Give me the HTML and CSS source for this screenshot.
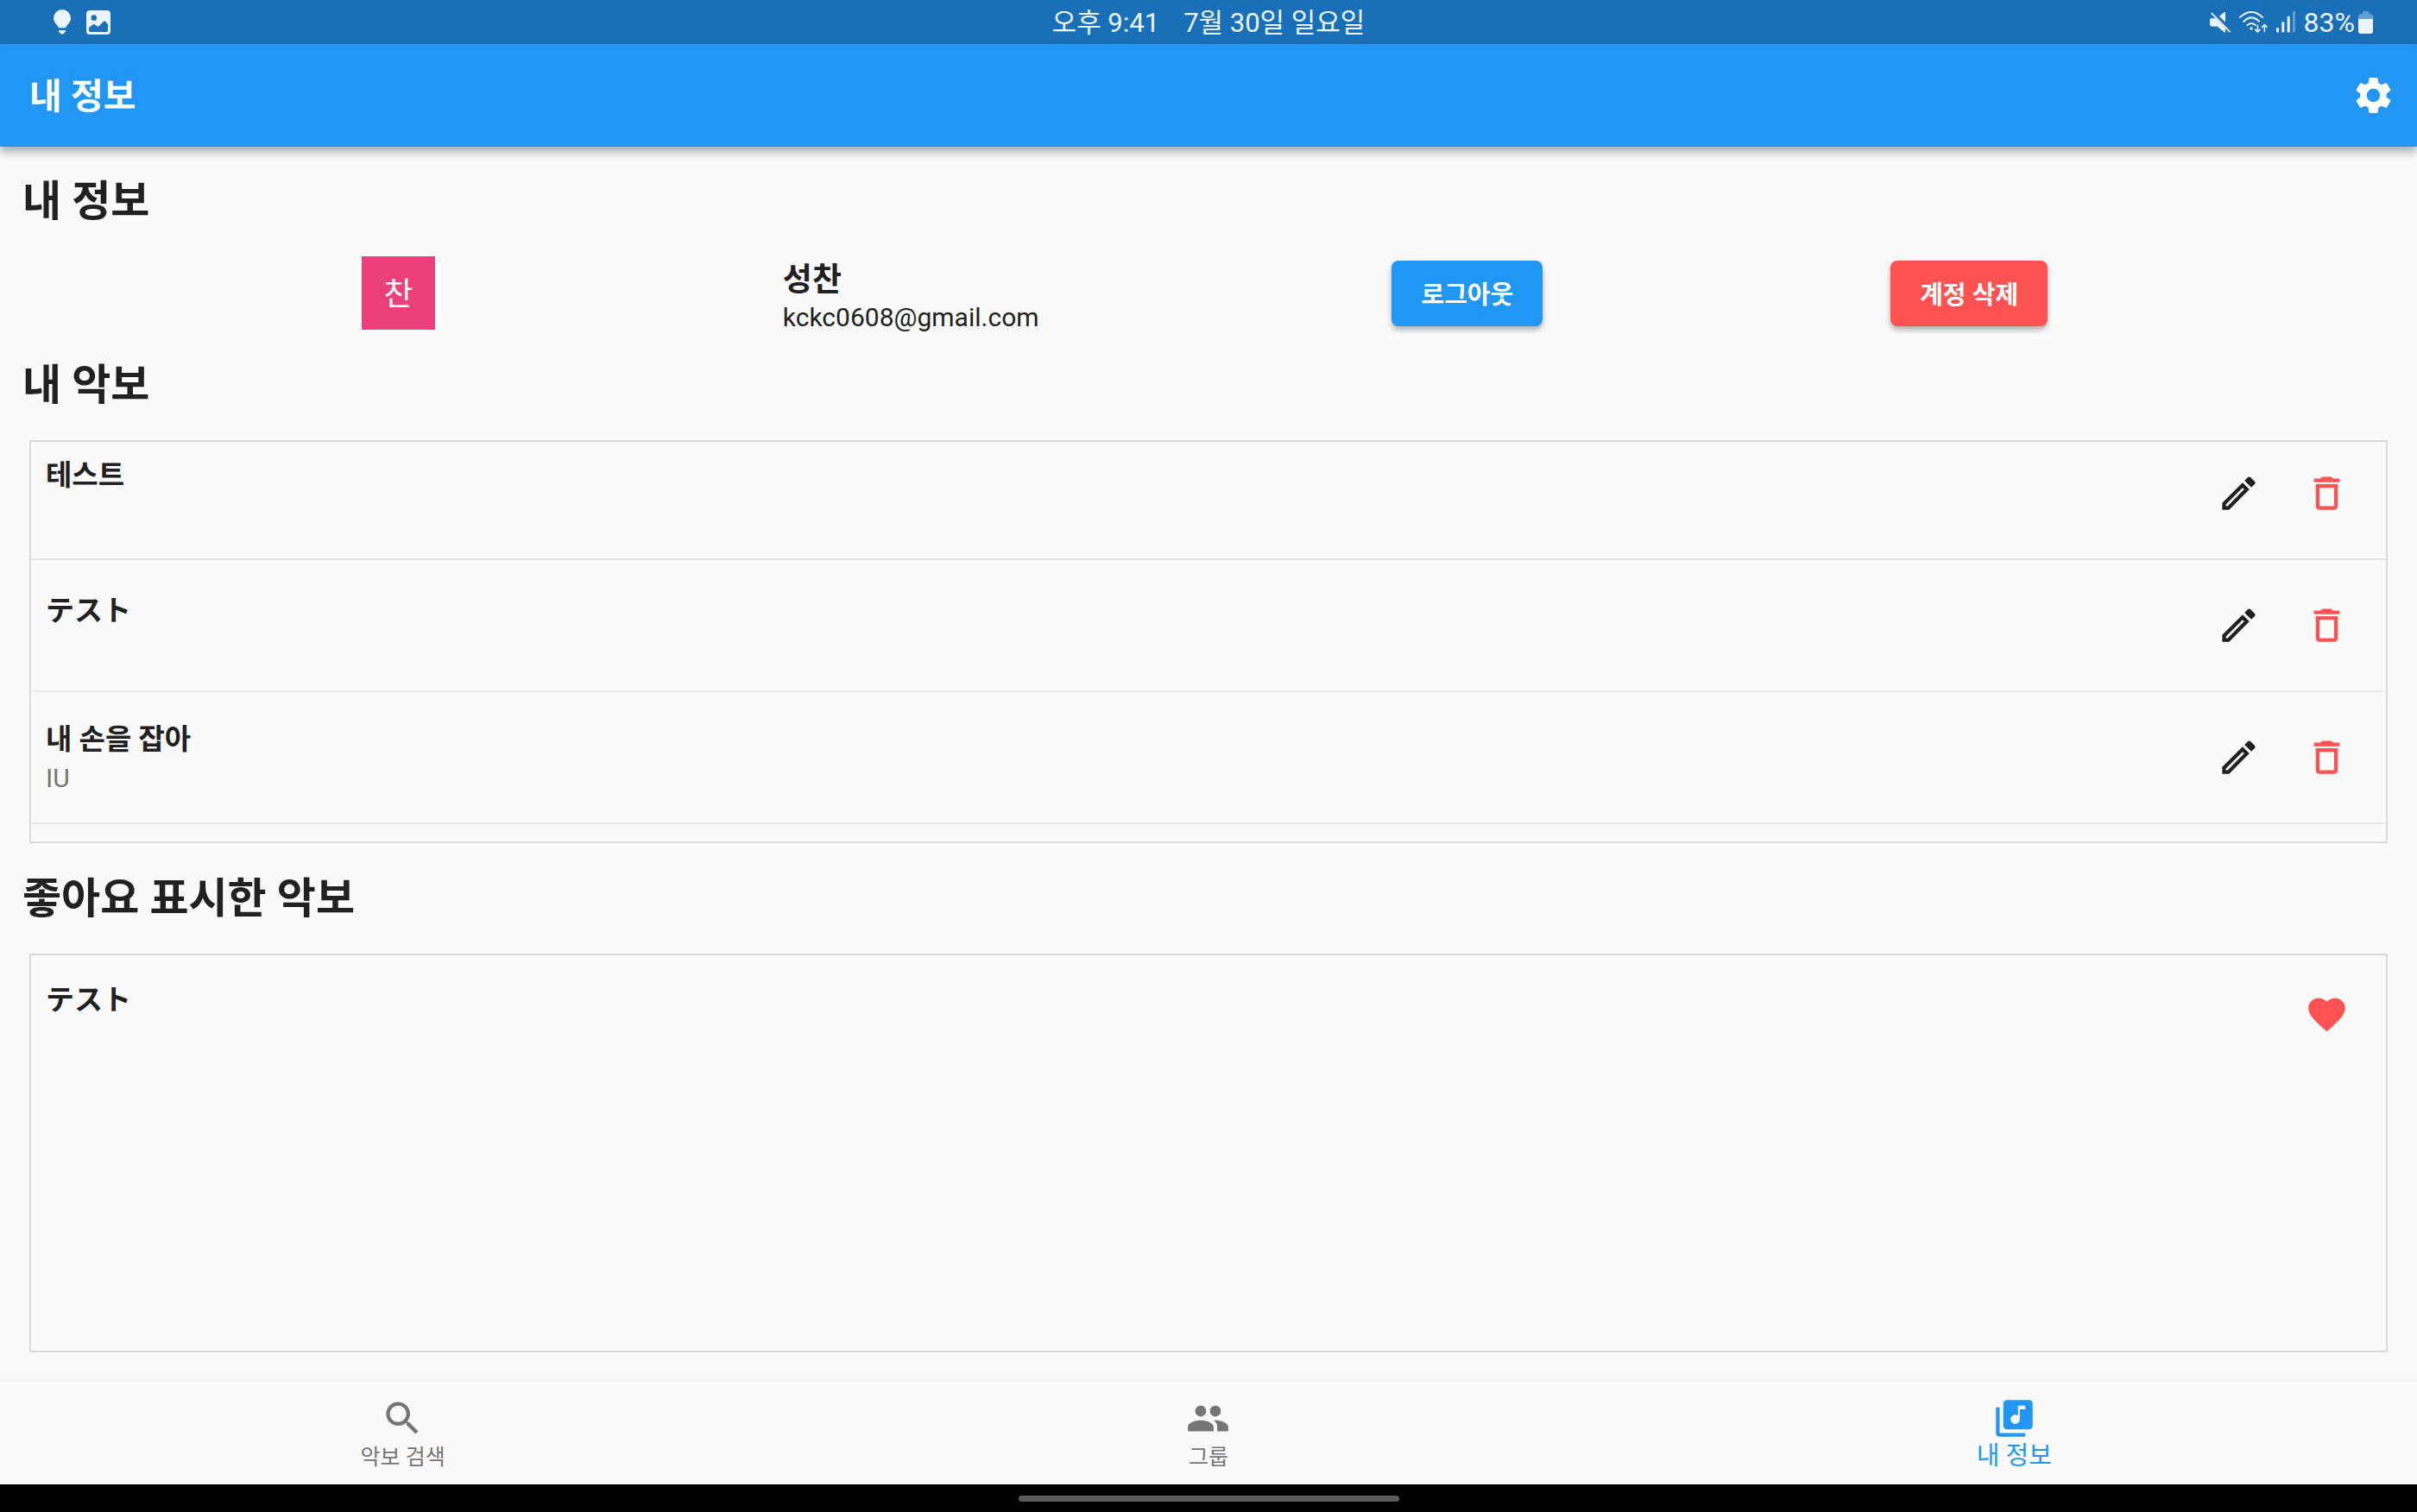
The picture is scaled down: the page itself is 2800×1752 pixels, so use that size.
FILE: index.html
```html
<!DOCTYPE html>
<html lang="ko">
<head>
<meta charset="utf-8">
<meta name="viewport" content="width=device-width, initial-scale=1">
<title>내 정보</title>
<link rel="stylesheet" href="styles.css">
</head>
<body>
<svg class="sprite" aria-hidden="true">
  <symbol id="edit" viewBox="0 0 24 24"><path d="M14.06 9.02l.92.92L5.92 19H5v-.92l9.06-9.06M17.66 3c-.25 0-.51.1-.7.29l-1.83 1.83 3.75 3.75 1.83-1.83c.39-.39.39-1.02 0-1.41l-2.34-2.34c-.2-.2-.45-.29-.71-.29zm-3.6 3.19L3 17.25V21h3.75L17.81 9.94l-3.75-3.75z"/></symbol>
  <symbol id="trash" viewBox="0 0 24 24"><path d="M6 19c0 1.1.9 2 2 2h8c1.1 0 2-.9 2-2V7H6v12zM8 9h8v10H8V9zm7.5-5l-1-1h-5l-1 1H5v2h14V4h-3.5z"/></symbol>
</svg>

<div class="status-bar">
  <div class="status-left">
    <svg width="20" height="30" viewBox="0 0 60 90" aria-hidden="true"><path d="M30 0a30 30 0 0 1 30 30c0 12-7 18-12 24-3 4-5 6-6 10H18c-1-4-3-6-6-10C7 48 0 42 0 30A30 30 0 0 1 30 0zM18 72h24v4c0 3-3 5-5 6l-7 5-7-5c-2-1-5-3-5-6z"/></svg>
    <svg width="28" height="28" viewBox="0 0 84 84" aria-hidden="true"><path fill-rule="evenodd" d="M12 0h60a12 12 0 0 1 12 12v60a12 12 0 0 1-12 12H12A12 12 0 0 1 0 72V12A12 12 0 0 1 12 0zm14 16a10 10 0 1 0 1 0zM9 60v10q0 5 5 5h56q5 0 5-5V48L63 36 41 57 26 47z"/></svg>
  </div>
  <div class="status-center"><span>오후 9:41</span><span>7월 30일 일요일</span></div>
  <div class="status-right">
    <svg width="24" height="24" viewBox="0 0 72 72" aria-hidden="true"><path d="M54 0v35L33 15 49 1q3-3 5-1zM5 22h15l34 34v15q-2 1-5-2L26 50H8q-8-1-8-9V28q0-6 5-6z"/><path d="M7 5l62 63" fill="none" stroke="currentColor" stroke-width="6" stroke-linecap="round"/></svg>
    <svg width="33" height="26" viewBox="0 0 99 78" aria-hidden="true"><g fill="none" stroke="currentColor" stroke-width="6" stroke-linecap="round" stroke-linejoin="round"><path d="M3 21Q42-15 81 21M16 36Q42 9 69 35M28 49Q42 36 56 48"/><path stroke-width="5" d="M64 49v23m-8-8l8 8 8-8M88 70V47m-8 8l8-8 8 8"/></g><circle cx="42" cy="60" r="5"/></svg>
    <svg width="22" height="25" viewBox="0 0 66 75" aria-hidden="true"><rect y="57" width="9" height="17" rx="4"/><rect x="19" y="37" width="9" height="37" rx="4"/><rect x="38" y="17" width="9" height="57" rx="4"/><rect x="57" width="9" height="74" rx="4" opacity=".35"/></svg>
    <span class="battery"><span>83%</span><svg width="17" height="26" viewBox="0 0 51 78" aria-hidden="true"><path opacity=".35" d="M0 27V18q0-8 8-8h6V5q0-5 5-5h13q5 0 5 5v5h6q8 0 8 8v9z"/><path d="M0 27h51v43q0 8-8 8H8q-8 0-8-8z"/></svg></span>
  </div>
</div>

<header class="app-bar">
  <h1>내 정보</h1>
  <button class="icon-button" type="button" aria-label="설정"><svg class="icon" viewBox="0 0 24 24" aria-hidden="true"><path d="M19.14 12.94c.04-.3.06-.61.06-.94 0-.32-.02-.64-.07-.94l2.03-1.58c.18-.14.23-.41.12-.61l-1.92-3.32c-.12-.22-.37-.29-.59-.22l-2.39.96c-.5-.38-1.03-.7-1.62-.94l-.36-2.54c-.04-.24-.24-.41-.48-.41h-3.84c-.24 0-.43.17-.47.41l-.36 2.54c-.59.24-1.13.57-1.62.94l-2.39-.96c-.22-.08-.47 0-.59.22L2.74 8.87c-.12.21-.08.47.12.61l2.03 1.58c-.05.3-.09.63-.09.94s.02.64.07.94l-2.03 1.58c-.18.14-.23.41-.12.61l1.92 3.32c.12.22.37.29.59.22l2.39-.96c.5.38 1.03.7 1.62.94l.36 2.54c.05.24.24.41.48.41h3.84c.24 0 .44-.17.47-.41l.36-2.54c.59-.24 1.13-.56 1.62-.94l2.39.96c.22.08.47 0 .59-.22l1.92-3.32c.12-.22.07-.47-.12-.61l-2.01-1.58zM12 15.6c-1.98 0-3.6-1.62-3.6-3.6s1.62-3.6 3.6-3.6 3.6 1.62 3.6 3.6-1.62 3.6-3.6 3.6z"/></svg></button>
</header>

<main>
  <section>
    <h2>내 정보</h2>
    <div class="profile">
      <div class="avatar">찬</div>
      <div class="identity">
        <strong>성찬</strong>
        <span>kckc0608@gmail.com</span>
      </div>
      <button class="button" type="button">로그아웃</button>
      <button class="button danger" type="button">계정 삭제</button>
    </div>
  </section>

  <section class="scores">
    <h2>내 악보</h2>
    <div class="list-box">
      <ul class="list scrolled">
        <li><div class="song"><strong>테스트</strong><span></span></div><div class="actions"><button class="icon-button" type="button" aria-label="수정"><svg class="icon"><use href="#edit"/></svg></button><button class="icon-button red" type="button" aria-label="삭제"><svg class="icon"><use href="#trash"/></svg></button></div></li>
        <li><div class="song"><strong lang="ja">テスト</strong><span></span></div><div class="actions"><button class="icon-button" type="button" aria-label="수정"><svg class="icon"><use href="#edit"/></svg></button><button class="icon-button red" type="button" aria-label="삭제"><svg class="icon"><use href="#trash"/></svg></button></div></li>
        <li><div class="song"><strong>내 손을 잡아</strong><span>IU</span></div><div class="actions"><button class="icon-button" type="button" aria-label="수정"><svg class="icon"><use href="#edit"/></svg></button><button class="icon-button red" type="button" aria-label="삭제"><svg class="icon"><use href="#trash"/></svg></button></div></li>
      </ul>
    </div>
  </section>

  <section class="scores liked">
    <h2>좋아요 표시한 악보</h2>
    <div class="list-box">
      <ul class="list single">
        <li><div class="song"><strong lang="ja">テスト</strong><span></span></div><div class="actions"><button class="icon-button red" type="button" aria-label="좋아요 취소"><svg class="icon" viewBox="0 0 24 24"><path d="M12 21.35l-1.45-1.32C5.4 15.36 2 12.28 2 8.5 2 5.42 4.42 3 7.5 3c1.74 0 3.41.81 4.5 2.09C13.09 3.81 14.76 3 16.5 3 19.58 3 22 5.42 22 8.5c0 3.78-3.4 6.86-8.55 11.54L12 21.35z"/></svg></button></div></li>
      </ul>
    </div>
  </section>
</main>

<nav class="tabs">
  <a href="#search"><svg class="icon" viewBox="0 0 24 24" aria-hidden="true"><path d="M15.5 14h-.79l-.28-.27C15.41 12.59 16 11.11 16 9.5 16 5.91 13.09 3 9.5 3S3 5.91 3 9.5 5.91 16 9.5 16c1.61 0 3.09-.59 4.23-1.57l.27.28v.79l5 4.99L20.49 19l-4.99-5zm-6 0C7.01 14 5 11.99 5 9.5S7.01 5 9.5 5 14 7.01 14 9.5 11.99 14 9.5 14z"/></svg><span>악보 검색</span></a>
  <a href="#group"><svg class="icon" viewBox="0 0 24 24" aria-hidden="true"><path d="M16 11c1.66 0 2.99-1.34 2.99-3S17.66 5 16 5c-1.66 0-3 1.34-3 3s1.34 3 3 3zm-8 0c1.66 0 2.99-1.34 2.99-3S9.66 5 8 5C6.34 5 5 6.34 5 8s1.34 3 3 3zm0 2c-2.33 0-7 1.17-7 3.5V19h14v-2.5c0-2.33-4.67-3.5-7-3.5zm8 0c-.29 0-.62.02-.97.05 1.16.84 1.97 1.97 1.97 3.45V19h6v-2.5c0-2.33-4.67-3.5-7-3.5z"/></svg><span>그룹</span></a>
  <a class="current" href="#me" aria-current="page"><svg class="icon" viewBox="0 0 24 24" aria-hidden="true"><path d="M20 2H8c-1.100 0-2 .9-2 2v12c0 1.100.9 2 2 2h12c1.100 0 2-.9 2-2V4c0-1.100-.9-2-2-2zm-2 5h-3v5.500c0 1.380-1.120 2.500-2.500 2.500S10 13.880 10 12.500s1.120-2.500 2.500-2.500c.57 0 1.080.19 1.500.51V5h4v2zM4 6H2v14c0 1.100.9 2 2 2h14v-2H4V6z"/></svg><span>내 정보</span></a>
</nav>
<div class="gesture-bar"><span></span></div>
</body>
</html>
```

FILE: styles.css
```css
* {
  box-sizing: border-box;
}

body {
  margin: 0;
  min-height: 100vh;
  display: flex;
  flex-direction: column;
  background: #fafafa;
  color: #212121;
  font-family: Roboto, "Noto Sans CJK KR", sans-serif;
  font-size: 30px;
}

h1,
h2,
ul {
  margin: 0;
  padding: 0;
}

svg {
  display: block;
  fill: currentColor;
}

button {
  border: 0;
  padding: 0;
  background: none;
  color: inherit;
  font: inherit;
}

.sprite {
  position: absolute;
  width: 0;
  height: 0;
}

.icon {
  width: 51px;
  height: 51px;
}

.icon-button {
  width: 102px;
  height: 102px;
  display: grid;
  place-items: center;
}

.red {
  color: #ff5252;
}

/* System status bar */
.status-bar {
  height: 51px;
  padding: 0 51px;
  display: grid;
  grid-template-columns: 1fr auto 1fr;
  align-items: center;
  background: #1a70b8;
  color: #ecf4fd;
  font-size: 32px;
  line-height: 48px;
}

.status-left,
.status-center,
.status-right,
.battery {
  display: flex;
  align-items: center;
}

.status-left {
  gap: 18px;
  padding-left: 11px;
}

.status-center {
  gap: 28px;
  padding-top: 3px;
  font-size: 31px;
}

.status-right {
  justify-content: flex-end;
  gap: 10px;
}

.battery {
  gap: 4px;
}

/* App bar */
.app-bar {
  height: 119px;
  padding-left: 34px;
  display: flex;
  align-items: center;
  justify-content: space-between;
  background: #2196f3;
  color: #fff;
  box-shadow: 0 6px 10px rgba(0, 0, 0, 0.32);
}

.app-bar h1 {
  padding-top: 2px;
  font-size: 41px;
  font-weight: 700;
  line-height: 60px;
}

/* Page */
main {
  flex: 1;
  display: flex;
  flex-direction: column;
  padding-top: 28px;
}

h2 {
  padding-left: 26px;
  margin-bottom: 27px;
  font-size: 49px;
  font-weight: 700;
  line-height: 72px;
}

.profile {
  height: 85px;
  display: flex;
  align-items: center;
  justify-content: space-evenly;
  padding: 0 25px 0 16px;
  margin-bottom: 29px;
}

.avatar {
  width: 85px;
  height: 85px;
  padding-bottom: 4px;
  display: grid;
  place-items: center;
  background: #ec407a;
  color: #fff;
  font-size: 37px;
}

.identity {
  display: flex;
  flex-direction: column;
  padding: 11px 6px 0 0;
}

.identity strong {
  font-size: 37px;
  line-height: 46px;
}

.identity span {
  line-height: 40px;
}

.button {
  height: 76px;
  padding: 0 34px 2px;
  border-radius: 8px;
  background: #2196f3;
  color: #fff;
  font-size: 29px;
  font-weight: 700;
  box-shadow: 0 4px 6px rgba(0, 0, 0, 0.3);
}

.danger {
  background: #ff5252;
}

.scores {
  flex: 1 1 0;
  display: flex;
  flex-direction: column;
}

.list-box {
  flex: 1;
  margin: 0 34px 29px;
  border: 2px solid #dadada;
  overflow: hidden;
}

.liked .list-box {
  margin-bottom: 34px;
}

.list {
  list-style: none;
}

.scrolled {
  margin-top: -9px;
}

.list li {
  height: 146px;
  padding: 0 18px 8px 17px;
  margin-bottom: 7px;
  display: flex;
  align-items: center;
  justify-content: space-between;
  border-bottom: 2px solid #e9e9e9;
}

.single li {
  border-bottom-color: transparent;
}

.song {
  display: flex;
  flex-direction: column;
}

.song strong {
  font-size: 33px;
  line-height: 50px;
}

.song span {
  height: 40px;
  color: #757575;
  line-height: 40px;
}

.song [lang="ja"] {
  padding-top: 8px;
  font-family: Roboto, "Noto Sans CJK JP", sans-serif;
}

.actions {
  display: flex;
}

/* Bottom navigation */
.tabs {
  height: 119px;
  display: flex;
  box-shadow: 0 -2px 4px rgba(0, 0, 0, 0.05);
}

.tabs a {
  flex: 1;
  display: flex;
  flex-direction: column;
  align-items: center;
  padding-top: 17px;
  color: #757575;
  font-size: 25px;
  line-height: 40px;
  text-decoration: none;
}

.tabs .current {
  color: #2196f3;
  font-size: 29px;
  line-height: 36px;
}

.gesture-bar {
  height: 32px;
  display: grid;
  place-items: center;
  background: #000;
}

.gesture-bar span {
  width: 441px;
  height: 7px;
  border-radius: 4px;
  background: #5c5c5c;
}
```
